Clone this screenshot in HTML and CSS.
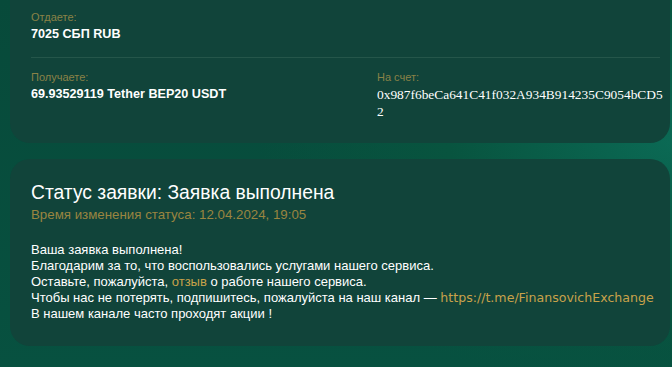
FILE: index.html
```html
<!DOCTYPE html>
<html lang="ru">
<head>
    <meta charset="UTF-8">
    <meta name="viewport" content="width=device-width, initial-scale=1.0">
    <title>Заявка</title>
    <link rel="stylesheet" href="styles.css">
</head>
<body>

<div class="page">
    <div class="card info">
        <div class="row">
            <div class="field">
                <div class="label">Отдаете:</div>
                <div class="value">7025 СБП RUB</div>
            </div>
        </div>
        <div class="divider"></div>
        <div class="row two">
            <div class="field">
                <div class="label">Получаете:</div>
                <div class="value">69.93529119 Tether BEP20 USDT</div>
            </div>
            <div class="field">
                <div class="label">На счет:</div>
                <div class="value address">0x987f6beCa641C41f032A934B914235C9054bCD52</div>
            </div>
        </div>
    </div>

    <div class="card status">
        <h2 class="status-title">Статус заявки: Заявка выполнена</h2>
        <div class="status-time">Время изменения статуса: 12.04.2024, 19:05</div>
        <p class="status-text">
            Ваша заявка выполнена!<br>
            Благодарим за то, что воспользовались услугами нашего сервиса.<br>
            Оставьте, пожалуйста, <a href="#" class="gold">отзыв</a> о работе нашего сервиса.<br>
            Чтобы нас не потерять, подпишитесь, пожалуйста на наш канал — <a href="#" class="gold link">https://t.me/FinansovichExchange</a><br>
            В нашем канале часто проходят акции !
        </p>
    </div>
</div>

</body>
</html>
```

FILE: styles.css
```css
html, body {
    margin: 0;
    height: 100%;
}
body {
    background: radial-gradient(ellipse 420px 260px at 680px 140px, #0b6a55 0%, #08543f 55%, rgba(7, 72, 56, 0) 100%),
                linear-gradient(180deg, #074a3a 0%, #075140 100%);
    font-family: "Liberation Sans", Arial, sans-serif;
    color: #fff;
    overflow: hidden;
}
.page {
    display: flex;
    flex-direction: column;
    gap: 16px;
    padding: 0 2px 0 10px;
    margin-top: -30px;
}
.card {
    background: #11443a;
    border-radius: 20px;
}
.info {
    height: 173px;
    padding: 40px 10px 0 21px;
    box-sizing: border-box;
}
.row {
    padding-bottom: 15px;
}
.row.two {
    display: grid;
    grid-template-columns: 346px 1fr;
    padding-top: 12px;
}
.divider {
    height: 1px;
    background: #25564a;
}
.label {
    font-size: 11px;
    color: #8a8247;
    line-height: 14px;
    margin-bottom: 2px;
}
.value {
    font-size: 12.6px;
    font-weight: bold;
    line-height: 16px;
}
.address {
    font-family: "Liberation Serif", serif;
    font-size: 13.4px;
    font-weight: normal;
    width: 288px;
    word-break: break-all;
    line-height: 17px;
}
.status {
    height: 187px;
    box-sizing: border-box;
    padding: 22px 10px 0 21px;
}
.status-title {
    margin: 0;
    font-size: 19.3px;
    font-weight: normal;
    line-height: 24px;
}
.status-time {
    font-size: 13.3px;
    color: #9a8540;
    line-height: 16px;
    margin-top: 2px;
}
.status-text {
    margin: 19px 0 0;
    font-size: 13px;
    line-height: 16px;
}
.gold {
    color: #c8a24a;
    text-decoration: none;
}
.link {
    font-family: "DejaVu Sans", sans-serif;
    font-size: 12.6px;
}
```
